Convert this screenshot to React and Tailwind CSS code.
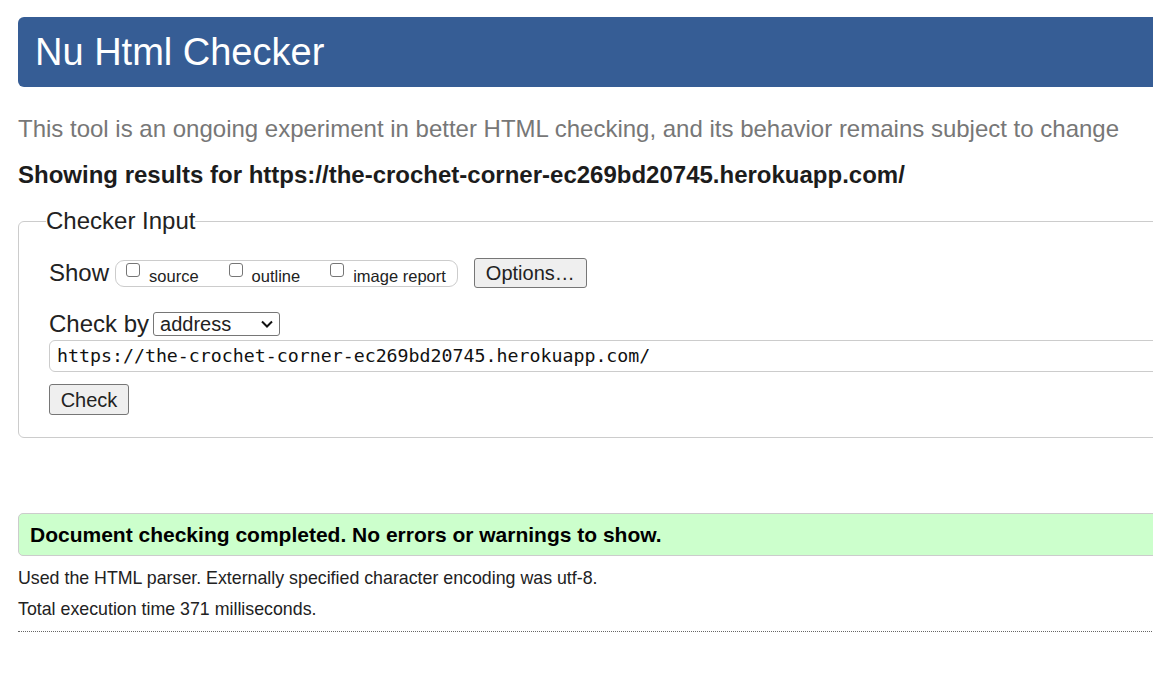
import React from "react";

function Check({ label, first }) {
  return (
    <span className={"flex items-start " + (first ? "" : "ml-[30px]")}>
      <span className="inline-block w-[14px] h-[14px] border border-[#767676] rounded-[3px] bg-white mr-[9px]" />
      <span className="mt-[3px]">{label}</span>
    </span>
  );
}

export default function App() {
  return (
    <div className="w-[1153px] h-[682px] overflow-hidden bg-white text-[#222] font-['Liberation_Sans',Arial,sans-serif]">
      <div className="w-[1400px] pl-[18px]">
        <div className="mt-[17px] h-[70px] bg-[#365d95] rounded-l-[6px] pl-[17px] flex items-center text-[38px] text-white leading-none">
          Nu Html Checker
        </div>
        <p className="mt-[28px] text-[24px] leading-[28px] text-[#777]">
          This tool is an ongoing experiment in better HTML checking, and its behavior remains subject to change
        </p>
        <p className="mt-[18px] text-[24px] leading-[28px] font-bold text-[#1c1c1c]">
          Showing results for https://the-crochet-corner-ec269bd20745.herokuapp.com/
        </p>
        <fieldset className="mt-[19px] border border-[#ccc] rounded-[6px] pl-[30px] pb-[22px] pt-[24px]">
          <legend className="ml-[-3px] text-[24px] leading-[26px] px-0">Checker Input</legend>
          <div className="flex items-center h-[30px]">
            <span className="text-[24px] leading-[28px] mr-[6px]">Show</span>
            <div className="h-[27px] border border-[#ccc] rounded-[9px] flex items-start pl-[10px] pr-[11px] pt-[2px] text-[16.5px] leading-[20px]">
              <Check label="source" first />
              <Check label="outline" />
              <Check label="image report" />
            </div>
            <div className="ml-[16px] h-[30px] px-[11px] flex items-center border border-[#767676] rounded-[3px] bg-[#efefef] text-[20px]">
              Options…
            </div>
          </div>
          <div className="flex items-center mt-[23px] h-[26px]">
            <span className="text-[24px] leading-[28px] mr-[4px]">Check by</span>
            <div className="w-[127px] h-[24px] border border-[#767676] rounded-[3px] flex items-center justify-between pl-[6px] pr-[5px] text-[20px]">
              <span>address</span>
              <svg width="14" height="10" viewBox="0 0 14 10"><path d="M2 2.5 L7 7.5 L12 2.5" fill="none" stroke="#111" strokeWidth="2" /></svg>
            </div>
          </div>
          <div className="mt-[3px] h-[32px] border border-[#ccc] rounded-[6px] flex items-center pl-[7px] font-['DejaVu_Sans_Mono',monospace] text-[18.25px] text-[#111]">
            https://the-crochet-corner-ec269bd20745.herokuapp.com/
          </div>
          <div className="mt-[12px] w-[80px] h-[31px] flex items-center justify-center border border-[#767676] rounded-[3px] bg-[#efefef] text-[20px]">
            Check
          </div>
        </fieldset>
        <div className="mt-[75px] h-[43px] bg-[#ccffcc] border border-[#ccc] rounded-l-[5px] pl-[11px] flex items-center text-[21px] font-bold text-black">
          Document checking completed. No errors or warnings to show.
        </div>
        <p className="mt-[12px] text-[17.8px] leading-[21px]">Used the HTML parser. Externally specified character encoding was utf-8.</p>
        <p className="mt-[10px] text-[17.8px] leading-[21px]">Total execution time 371 milliseconds.</p>
        <div className="mt-[11px] border-t border-dotted border-[#666]" />
      </div>
    </div>
  );
}
